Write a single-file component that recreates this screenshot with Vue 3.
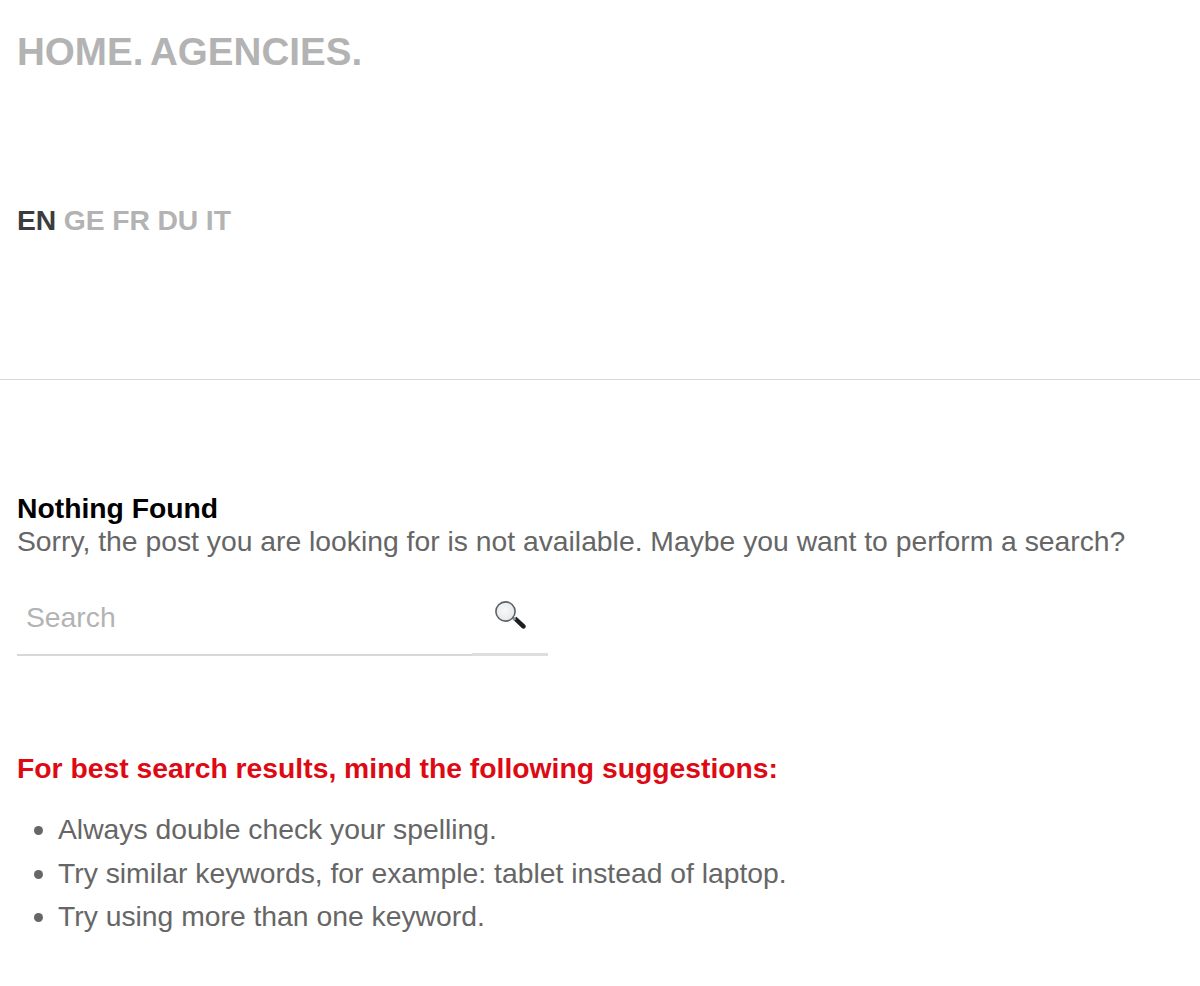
<script setup>
const languages = [
  { code: 'EN', active: true },
  { code: 'GE' },
  { code: 'FR' },
  { code: 'DU' },
  { code: 'IT' }
]

const tips = [
  'Always double check your spelling.',
  'Try similar keywords, for example: tablet instead of laptop.',
  'Try using more than one keyword.'
]
</script>

<template>
  <div class="page">
    <header class="top">
      <nav class="menu">
        <a class="menu-item">HOME.</a>
        <a class="menu-item">AGENCIES.</a>
      </nav>
      <div class="langs">
        <a v-for="lang in languages" :key="lang.code" class="lang" :class="{ active: lang.active }">{{ lang.code }}</a>
      </div>
    </header>

    <main class="content">
      <h1 class="title">Nothing Found</h1>
      <p class="sorry">Sorry, the post you are looking for is not available. Maybe you want to perform a search?</p>

      <form class="search" @submit.prevent>
        <input class="search-input" type="text" placeholder="Search" />
        <button class="search-btn" type="button" aria-label="Search">
          <svg width="34" height="32" viewBox="0 0 34 32">
            <defs>
              <radialGradient id="glass" cx="0.45" cy="0.45" r="0.6">
                <stop offset="0" stop-color="#f8f8f8" />
                <stop offset="1" stop-color="#e4e6e8" />
              </radialGradient>
            </defs>
            <path d="M20 18.5l3.4-2.8 8.6 8c1 1 1 2.4.1 3.3-.9.9-2.3.9-3.3-.1z" fill="#1c1f22" />
            <path d="M18.4 17l2-1.7 3 2.7-2.3 2.1z" fill="#8a8f93" />
            <circle cx="12.5" cy="10.5" r="9.6" fill="url(#glass)" stroke="#5d6165" stroke-width="1.6" />
          </svg>
        </button>
      </form>

      <h2 class="tips-title">For best search results, mind the following suggestions:</h2>
      <ul class="tips">
        <li v-for="tip in tips" :key="tip">{{ tip }}</li>
      </ul>
    </main>
  </div>
</template>

<style>
html, body {
  margin: 0;
  background: #fff;
}
</style>

<style scoped>
.page {
  font-family: "Liberation Sans", Arial, sans-serif;
  color: #666;
  height: 986px;
  overflow: hidden;
}

.top {
  height: 355px;
  padding: 24px 17px 0;
  border-bottom: 1px solid #d8d8d8;
}

.menu {
  display: flex;
  gap: 6.5px;
  height: 56px;
  line-height: 56px;
  font-size: 38.6px;
  font-weight: 700;
  color: #b3b3b3;
}

.langs {
  display: flex;
  gap: 7.5px;
  margin-top: 115px;
  font-size: 28.3px;
  line-height: 50px;
  font-weight: 700;
  color: #b3b3b3;
}

.lang.active {
  color: #3c3c3c;
}

.content {
  padding: 111px 17px 0;
}

.title {
  margin: 0;
  font-size: 28.3px;
  line-height: 34px;
  font-weight: 700;
  color: #000;
}

.sorry {
  margin: 0;
  font-size: 28.3px;
  line-height: 32px;
}

.search {
  display: flex;
  margin-top: 29px;
  width: 531px;
}

.search-input {
  width: 455px;
  height: 70px;
  box-sizing: border-box;
  padding: 0 9px 6px;
  border: 0;
  border-bottom: 2px solid #d8d8d8;
  outline: none;
  font-family: inherit;
  font-size: 28.3px;
  color: #666;
}

.search-input::placeholder {
  color: #b3b3b3;
  opacity: 1;
}

.search-btn {
  width: 76px;
  height: 70px;
  padding: 0 0 20px 21px;
  box-sizing: border-box;
  background: none;
  border: 0;
  border-bottom: 3px solid #dedede;
  display: flex;
  align-items: flex-end;
}

.tips-title {
  margin: 95px 0 0;
  font-size: 28.3px;
  line-height: 34px;
  font-weight: 700;
  color: #dd0a14;
}

.tips {
  margin: 23px 0 0;
  padding: 0 0 0 41px;
  font-size: 28.3px;
  line-height: 43.5px;
}
</style>
